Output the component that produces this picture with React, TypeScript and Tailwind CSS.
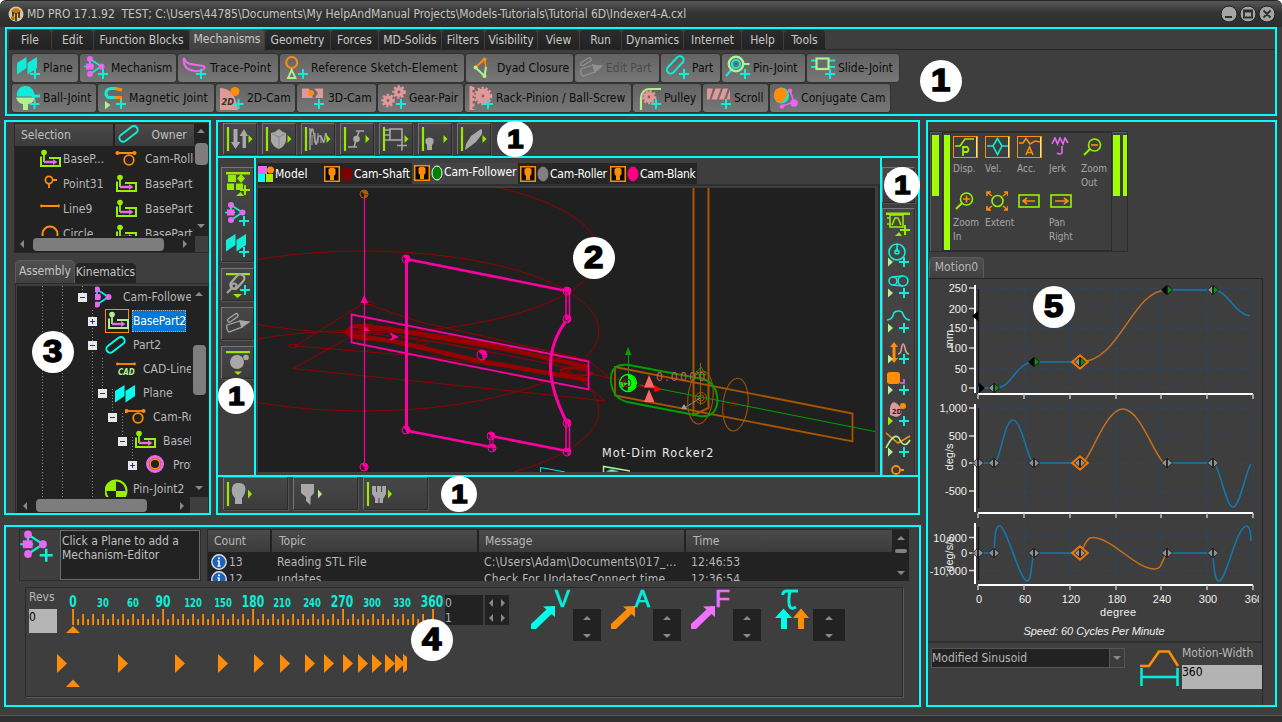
import React from "react";

type Kids = { children?: React.ReactNode };

const TEAL = "#10ecd8";
const MAG = "#e868f0";
const ORG = "#ff8c0a";
const LIME = "#98f000";
const PALE = "#b0f090";
const PINK = "#e09898";
const GREY = "#a8a8a8";

/* ---------- drawing helpers ---------- */

const Plus = ({ x, y, c = TEAL }: { x: number; y: number; c?: string }) => (
  <path d={`M${x - 5} ${y}H${x + 5}M${x} ${y - 5}V${y + 5}`} stroke={c} strokeWidth="2" fill="none" />
);

const Gear = ({ x, y, r }: { x: number; y: number; r: number }) => (
  <g>
    <circle cx={x} cy={y} r={r - 0.5} fill={PINK} />
    <circle cx={x} cy={y} r={r} fill="none" stroke={PINK} strokeWidth="2.6" strokeDasharray="2.2 1.8" />
    <circle cx={x} cy={y} r="1.4" fill="#6b6b6b" />
  </g>
);

const PlaneShape = ({ c = TEAL }: { c?: string }) => (
  <path d="M5 9L14.5 3V14L5 20.500ZM15.500 9L25 3V14L15.500 20.500Z" fill={c} />
);

const MechShape = () => (
  <g>
    <path d="M10 5L21.500 12.500L10 20M10 5V12M4 12.500H14" stroke={TEAL} strokeWidth="1.700" fill="none" />
    <circle cx="10" cy="5" r="3" fill={MAG} />
    <circle cx="21.500" cy="12.500" r="3" fill={MAG} />
    <circle cx="10" cy="20" r="3" fill={MAG} />
    <rect x="6" y="9.500" width="7.500" height="6" fill={MAG} />
  </g>
);

const SlotShape = ({ c = TEAL }: { c?: string }) => (
  <rect x="5" y="-3.500" width="21" height="7.500" rx="3.750" fill="none" stroke={c} strokeWidth="2" />
);

const BasePart = ({ c = LIME }: { c?: string }) => (
  <g>
    <path d="M2 7.500V17H21V9H10" fill="none" stroke={c} strokeWidth="2" />
    <path d="M5 13V3" stroke={c} strokeWidth="1.800" />
    <circle cx="5" cy="3.500" r="2.800" fill={c} />
    <path d="M5 13H16" stroke={MAG} strokeWidth="2.400" />
    <path d="M14 10L18.500 13L14 16Z" fill={MAG} />
  </g>
);

const CamRoller = () => (
  <g fill="none" stroke={ORG} strokeWidth="1.800">
    <path d="M2 4H20" />
    <circle cx="2.500" cy="4" r="1.200" fill={ORG} />
    <circle cx="19.500" cy="4" r="1.200" fill={ORG} />
    <circle cx="14" cy="11" r="4.800" />
  </g>
);

const Svg = ({ w, h, children, cls = "" }: Kids & { w: number; h: number; cls?: string }) => (
  <svg width={w} height={h} viewBox={`0 0 ${w} ${h}`} className={`shrink-0 ${cls}`}>
    {children}
  </svg>
);

/* ---------- ribbon ---------- */

const menuTabs: [string, string][] = [
  ["File", "w-[42px]"],
  ["Edit", "w-[41px]"],
  ["Function Blocks", "w-[95px]"],
  ["Mechanisms", "w-[74px]"],
  ["Geometry", "w-[65px]"],
  ["Forces", "w-[47px]"],
  ["MD-Solids", "w-[62px]"],
  ["Filters", "w-[42px]"],
  ["Visibility", "w-[52px]"],
  ["View", "w-[41px]"],
  ["Run", "w-[41px]"],
  ["Dynamics", "w-[61px]"],
  ["Internet", "w-[57px]"],
  ["Help", "w-[41px]"],
  ["Tools", "w-[41px]"],
];

type Tool = { label: string; w: string; iw: number; off?: boolean; tr?: string; icon: React.ReactNode };

const row1: Tool[] = [
  { label: "Plane", w: "w-[66px]", iw: 31, icon: <><PlaneShape /><Plus x={23} y={20} /></> },
  { label: "Mechanism", w: "w-[96px]", iw: 31, icon: <><MechShape /><Plus x={23} y={20} /></> },
  {
    label: "Trace-Point", w: "w-[100px]", iw: 32, tr: "tracking-[0.2px]",
    icon: <><path d="M6 4C8 11 14 10 25 12C29 13 25 18 17 17C8 16 5 11 6 4Z" fill="none" stroke={MAG} strokeWidth="2.200" /><Plus x={23} y={20} /></>,
  },
  {
    label: "Reference Sketch-Element", w: "w-[184px]", iw: 31, tr: "tracking-[0.17px]",
    icon: <><circle cx="11.700" cy="8.500" r="5.500" fill="none" stroke={ORG} strokeWidth="2" /><path d="M11.700 14V17" stroke={ORG} strokeWidth="2" /><path d="M11.700 16L8 24H15.500Z" fill="none" stroke={PALE} strokeWidth="1.800" /><Plus x={23} y={20} /></>,
  },
  {
    label: "Dyad Closure", w: "w-[107px]", iw: 31,
    icon: <><path d="M9.500 13.500L18.500 5" stroke={ORG} strokeWidth="2" /><path d="M18.500 5L20 14" stroke={ORG} strokeWidth="1.500" /><path d="M9.500 13.500L18.500 22L20 13" stroke={PALE} strokeWidth="2" fill="none" /><circle cx="18.500" cy="5.500" r="2" fill={ORG} /><circle cx="9.500" cy="13.500" r="2" fill={PALE} /><circle cx="18.500" cy="22" r="2" fill={PALE} /></>,
  },
  {
    label: "Edit Part", w: "w-[84px]", iw: 31, off: true,
    icon: <g fill="none" stroke="#929292" strokeWidth="1.200"><rect x="5" y="6" width="12" height="3.600" rx="1.800" transform="rotate(-32 11 8)" /><path d="M6 15L18 11L20 18L8 22Q5 21 6 15Z" /><path d="M18 11L27 12L20 18Z" fill="#929292" /></g>,
  },
  { label: "Part", w: "w-[59px]", iw: 31, icon: <><g transform="translate(3.500 22) rotate(-47)"><SlotShape /></g><Plus x={23} y={20} /></> },
  {
    label: "Pin-Joint", w: "w-[83px]", iw: 31,
    icon: <><path d="M4 22L11 14" stroke={TEAL} strokeWidth="2" /><circle cx="14" cy="10" r="7.200" fill="none" stroke={PALE} strokeWidth="2.400" /><circle cx="14" cy="10" r="4" fill="none" stroke={TEAL} strokeWidth="2.200" /><path d="M21 10H27.500" stroke={PALE} strokeWidth="2" /><Plus x={23} y={20} /></>,
  },
  {
    label: "Slide-Joint", w: "w-[92px]", iw: 31,
    icon: <><path d="M4 6.500H28M4 13H28" stroke={TEAL} strokeWidth="1.800" /><rect x="9.500" y="4.500" width="12" height="10.500" fill="#6a6a6a" stroke={PALE} strokeWidth="2.200" /><Plus x={23} y={20} /></>,
  },
];

const row2: Tool[] = [
  {
    label: "Ball-Joint", w: "w-[84px]", iw: 31,
    icon: <><path d="M4 13.500H23Q21 20 16 20V26H11V20Q6 20 4 13.500Z" fill={PALE} /><path d="M5 12.500A8.700 8.700 0 1 1 22 12.500Z" fill={TEAL} /><path d="M20 12H28" stroke={TEAL} strokeWidth="3" /><Plus x={22.500} y={20} /></>,
  },
  {
    label: "Magnetic Joint", w: "w-[116px]", iw: 31, tr: "tracking-[0.15px]",
    icon: <><path d="M18 4.500H13Q8 5 8 9.500T13 13.500H18" fill="none" stroke={TEAL} strokeWidth="3.200" /><path d="M17 4.500L24 6M17 13.500H24" stroke={ORG} strokeWidth="3.200" /><path d="M7 17V25.500L12.500 21Z" fill={PALE} /><Plus x={23} y={20} /></>,
  },
  {
    label: "2D-Cam", w: "w-[79px]", iw: 31,
    icon: <><path d="M4 26V4Q19 4 22 26Z" fill={PINK} /><circle cx="19" cy="7.500" r="4.500" fill={ORG} /><text x="5.500" y="21" className="text-[9px] font-bold italic" fill="#3a2a2a">2D</text><Plus x={22.500} y={20} /></>,
  },
  {
    label: "3D-Cam", w: "w-[79px]", iw: 31,
    icon: <><path d="M5 4.500H12L16 14H5ZM17 4.500H26V14H18L21 9Z" fill={PINK} /><circle cx="14" cy="9" r="3" fill={ORG} /><Plus x={22} y={20} /></>,
  },
  { label: "Gear-Pair", w: "w-[85px]", iw: 31, icon: <><Gear x={21} y={8} r={5.5} /><Gear x={10} y={16.5} r={5.5} /><Plus x={23} y={20} /></> },
  {
    label: "Rack-Pinion / Ball-Screw", w: "w-[166px]", iw: 31,
    icon: <><rect x="4.500" y="2" width="3" height="24" fill={PINK} /><path d="M8 3V26" stroke={PINK} strokeWidth="3" strokeDasharray="3 2.500" /><Gear x={18} y={12} r={8} /><Plus x={23} y={20} /></>,
  },
  {
    label: "Pulley", w: "w-[68px]", iw: 31,
    icon: <><path d="M8 26V14Q9 5 17 5H28" fill="none" stroke={PALE} strokeWidth="2.200" /><Gear x={16} y={13} r={6} /><Plus x={23} y={20} /></>,
  },
  {
    label: "Scroll", w: "w-[65px]", iw: 31,
    icon: <><path d="M4 4.500H10L6.500 15.500H4ZM12.500 4.500H18L14 15.500H8.500ZM20 4.500H25L21 15.500H16ZM27 5V15.500H23.500Z" fill={PINK} /><Plus x={23} y={20} /></>,
  },
  {
    label: "Conjugate Cam", w: "w-[120px]", iw: 31, tr: "tracking-[0.1px]",
    icon: <><path d="M20 7L24 18L12 22" stroke={MAG} strokeWidth="1.600" fill="none" /><ellipse cx="11.500" cy="11.500" rx="7.500" ry="8" fill={TEAL} /><path d="M4 11Q4 4 11 4Q18 4 17 11Q14 19 9 19Q4 16 4 11Z" fill={ORG} /><circle cx="20" cy="6.700" r="2.300" fill={MAG} /><circle cx="24" cy="19" r="3.800" fill={MAG} /><circle cx="12" cy="22.500" r="2.300" fill={MAG} /></>,
  },
];

const ToolButton = ({ t }: { t: Tool }) => (
  <div className={`flex h-[28px] shrink-0 items-center rounded-[3px] bg-linear-to-b from-[#636363] to-[#777777] shadow-[0_0_0_1px_#333333] ${t.w}`}>
    <Svg w={t.iw} h={28}>{t.icon}</Svg>
    <span className={`whitespace-pre ${t.off ? "text-[#4a4a4a]" : "text-[#0a0a0a]"} ${t.tr ?? ""}`}>{t.label}</span>
  </div>
);

const Ribbon = () => (
  <section className="ml-[5px] h-[89px] w-[1272px] shrink-0 border-2 border-[#00ffff]">
    <div className="flex h-[21px] items-end gap-px border-b border-[#262626] pl-0.5">
      {menuTabs.map(([t, w]) => (
        <div
          key={t}
          className={`flex shrink-0 justify-center rounded-t-[4px] whitespace-pre text-[#c8c8c8] ${w} ${
            t === "Mechanisms" ? "-mb-px h-[21px] bg-linear-to-b from-[#505050] to-[#404040] pt-0.5" : "h-[19px] bg-linear-to-b from-[#2c2c2c] to-[#222222] pt-0.5"
          }`}
        >
          {t}
        </div>
      ))}
    </div>
    <div className="flex flex-col gap-0.5 pt-1 pl-[5px]">
      <div className="flex gap-0.5">{row1.map((t) => <ToolButton key={t.label} t={t} />)}</div>
      <div className="flex gap-0.5">{row2.map((t) => <ToolButton key={t.label} t={t} />)}</div>
    </div>
  </section>
);

/* ---------- left side: selection list and assembly tree ---------- */

const Arrow = ({ d, cls = "" }: { d: "up" | "down" | "left" | "right"; cls?: string }) => {
  const p = { up: "M0 6H8L4 2Z", down: "M0 2H8L4 6Z", left: "M6 0V8L2 4Z", right: "M2 0V8L6 4Z" }[d];
  return (
    <svg width="8" height="8" className={`shrink-0 ${cls}`}>
      <path d={p} fill="#888888" />
    </svg>
  );
};

const Point = () => (
  <g fill="none" stroke={ORG} strokeWidth="1.800"><circle cx="10" cy="6" r="3.600" /><path d="M14 6H18M10 10V14" /></g>
);
const Line = () => (
  <g fill={ORG}><path d="M2 7H20" stroke={ORG} strokeWidth="1.800" /><circle cx="2.500" cy="7" r="1.400" /><circle cx="19.500" cy="7" r="1.400" /></g>
);

const selRows: [React.ReactNode, string, React.ReactNode, string][] = [
  [<BasePart key="a" />, "BaseP...", <CamRoller key="b" />, "Cam-Roller"],
  [<Point key="a" />, "Point31", <BasePart key="b" />, "BasePart1"],
  [<Line key="a" />, "Line9", <BasePart key="b" />, "BasePart1"],
  [<circle key="a" cx="11" cy="10" r="7.500" fill="none" stroke={ORG} strokeWidth="2" />, "Circle", <BasePart key="b" />, "BasePart1"],
];

const SelectionList = () => (
  <div className="ml-2 h-[130px] w-[195px] shrink-0 border border-[#2a2a2a] bg-[#222222]">
    <div className="flex h-[112px]">
      <div className="w-[180px] overflow-hidden">
        <div className="flex h-[22px] gap-0.5">
          <div className="flex w-[98px] items-center bg-linear-to-b from-[#4a4a4a] to-[#3b3b3b] pl-1.5 text-[#c0c0c0]">Selection</div>
          <div className="flex w-[80px] items-center bg-linear-to-b from-[#4a4a4a] to-[#3b3b3b] text-[#c0c0c0]">
            <Svg w={37} h={22}><g transform="translate(1 19) rotate(-37)"><SlotShape /></g></Svg>
            Owner
          </div>
        </div>
        {selRows.map(([i1, a, i2, b], i) => (
          <div key={i} className="flex h-[25px] items-center text-[#b8b8b8]">
            <div className="flex w-[98px] shrink-0 items-center pl-[24px]">
              <Svg w={24} h={20}>{i1}</Svg>
              <span className="whitespace-pre">{a}</span>
            </div>
            <div className="flex shrink-0 items-center pl-0.5">
              <Svg w={30} h={20}>{i2}</Svg>
              <span className="whitespace-pre">{b}</span>
            </div>
          </div>
        ))}
      </div>
      <div className="flex w-[14px] flex-col items-center pt-[3px]">
        <Arrow d="up" />
        <div className="mt-2 h-[22px] w-[13px] rounded-[4px] bg-[#7d7d7d]" />
        <Arrow d="down" cls="mt-[57px]" />
      </div>
    </div>
    <div className="flex h-[16px] items-center pl-[3px]">
      <Arrow d="left" />
      <div className="ml-[7px] h-[13px] w-[131px] rounded-[4px] bg-[#7d7d7d]" />
      <Arrow d="right" cls="ml-[17px]" />
      <div className="ml-auto h-[16px] w-[13px] bg-[#3e3e3e]" />
    </div>
  </div>
);

type Node = { pad: string; box: "" | "+" | "-"; icon: React.ReactNode; label: string; sel?: boolean };

const nodes: Node[] = [
  { pad: "pl-[61px]", box: "-", label: "Cam-Follower", icon: <g transform="translate(-8 -1.500)"><MechShape /></g> },
  { pad: "pl-[71px]", box: "+", label: "BasePart2", sel: true, icon: <g transform="translate(1 1)"><BasePart c={PALE} /></g> },
  { pad: "pl-[71px]", box: "-", label: "Part2", icon: <g transform="translate(-2 20) rotate(-37)"><SlotShape c="#00ffee" /></g> },
  {
    pad: "pl-[81px]", box: "", label: "CAD-Lines",
    icon: <g><g transform="translate(0 -1)"><Line /></g><text x="3" y="17" className="text-[8px] font-bold italic" fill={PALE}>CAD</text></g>,
  },
  { pad: "pl-[81px]", box: "-", label: "Plane", icon: <g transform="translate(-5 0)"><PlaneShape c="#00ffee" /></g> },
  { pad: "pl-[91px]", box: "-", label: "Cam-Roller", icon: <g transform="translate(-1 1)"><CamRoller /></g> },
  { pad: "pl-[101px]", box: "-", label: "BasePart3", icon: <g transform="translate(-1 0)"><BasePart /></g> },
  {
    pad: "pl-[111px]", box: "+", label: "Profile",
    icon: <g fill="none" strokeWidth="3"><circle cx="10" cy="10" r="7.500" stroke={MAG} /><circle cx="10" cy="10" r="5" stroke={ORG} strokeWidth="1.800" /></g>,
  },
  {
    pad: "pl-[71px]", box: "", label: "Pin-Joint2",
    icon: <g><circle cx="11" cy="13" r="10.500" fill="none" stroke={LIME} strokeWidth="2" /><path d="M11 13V3A10 10 0 0 0 1 13ZM11 13H21A10 10 0 0 1 11 23Z" fill={LIME} /></g>,
  },
];

const AssemblyTree = () => (
  <div className="mt-[7px] ml-[9px] w-[196px]">
    <div className="flex h-[23px] items-end">
      <div className="flex h-[23px] w-[60px] items-center justify-center rounded-t-[5px] border border-b-0 border-[#5a5a5a] bg-linear-to-b from-[#505050] to-[#404040] pb-0.5 text-[#c4c4c4]">Assembly</div>
      <div className="flex h-[20px] w-[61px] items-center justify-center rounded-t-[5px] bg-[#252525] pb-0.5 text-[#c4c4c4]">Kinematics</div>
    </div>
    <div className="h-[230px] w-[194px] border border-[#2a2a2a] pt-0.5 pl-px">
      <div className="flex h-[211px] bg-[#222222]">
        <div className="relative w-[174px] overflow-hidden">
          <svg width="174" height="211" className="absolute top-0 left-0">
            <g stroke="#8c8c8c" strokeDasharray="1 2">
              <path d="M25.500 0V211M45.500 0V211M65.500 0V8M75.500 24V211M85.500 72V108M95.500 103V132M105.500 127V156M115.500 151V180" />
            </g>
          </svg>
          {nodes.map((n, i) => (
            <div key={i} className={`relative -top-px flex h-[24px] items-center ${n.pad}`}>
              <div className="w-[9px] shrink-0">
                {n.box !== "" && (
                  <svg width="9" height="9" className="block">
                    <rect width="9" height="9" fill="#e8e8e8" />
                    <path d={n.box === "+" ? "M2 4.500H7M4.500 2V7" : "M2 4.500H7"} stroke="#203870" />
                  </svg>
                )}
              </div>
              <div className={`ml-2 flex h-[24px] w-[24px] shrink-0 items-center ${n.sel ? "border border-[#ff8c0a]" : ""}`}>
                <Svg w={24} h={22}>{n.icon}</Svg>
              </div>
              <span className={n.sel ? "ml-[3px] h-[22px] w-[54px] border border-dotted border-[#ff9840] bg-[#0078d7] pt-[2px] tracking-[-0.15px] whitespace-pre text-white" : "ml-[4px] whitespace-pre text-[#b8b8b8]"}>{n.label}</span>
            </div>
          ))}
        </div>
        <div className="flex w-[16px] flex-col items-center pt-1">
          <Arrow d="up" />
          <div className="mt-[47px] h-[50px] w-[13px] rounded-[4px] bg-[#7d7d7d]" />
          <Arrow d="down" cls="mt-[89px]" />
        </div>
      </div>
      <div className="flex h-[17px] items-center bg-[#222222] pl-1">
        <Arrow d="left" />
        <div className="ml-[7px] h-[13px] w-[111px] rounded-[4px] bg-[#7d7d7d]" />
        <Arrow d="right" cls="ml-[31px]" />
        <div className="ml-auto h-[17px] w-[18px] bg-[#3e3e3e]" />
      </div>
    </div>
  </div>
);

const LeftPanel = () => (
  <section className="h-[395px] w-[207px] shrink-0 overflow-hidden border-2 border-[#00ffff] pt-px">
    <SelectionList />
    <AssemblyTree />
  </section>
);

/* ---------- centre: toolbars and model view ---------- */

const frame = "overflow-hidden border border-t-[#767676] border-l-[#767676] border-r-[#2b2b2b] border-b-[#2b2b2b] bg-linear-to-b from-[#474747] to-[#3c3c3c] p-px shadow-[1px_1px_0_#555555]";

const LG = "#98e800";
const topTools: React.ReactNode[] = [
  <g key="0" fill={GREY}><path d="M8.500 4H12.500V17H15.500L10.500 24L6 17H8.500ZM17.500 23V11H14.500L19 4L23 11H21V23Z" /></g>,
  <g key="1"><path d="M7 8Q12 7 15 4Q18 7 22 8V16Q21 21 15 24Q8 21 7 16Z" fill={GREY} /><path d="M8 9L15 12L21 9M15 12V23" fill="none" stroke="#8a8a8a" /></g>,
  <g key="2" fill="none" stroke={GREY} strokeWidth="1.400"><path d="M7 3V25M7 14Q9 -4 11 10T14 17T17 11T20 16T22 12T24 14" /><path d="M9 10V20M12 8V18M15 8V18M18 10V18" strokeWidth="1" /></g>,
  <g key="3" fill="none" stroke={GREY} strokeWidth="1.600"><path d="M6 22H12L17 6H22M8 22H15M14 6H22" /><circle cx="14.500" cy="14" r="2.500" fill={GREY} /></g>,
  <g key="4" fill="none" stroke={GREY} strokeWidth="1.600"><rect x="9" y="4" width="12" height="11" /><path d="M4 5H9M4 10H9M4 15H9M16 20.500H26M21 15.500V25.500" /></g>,
  <path key="5" d="M10 14Q14 11 18 14V18L16.500 20V25H11.500V20L10 18Z" fill={GREY} transform="translate(-4.500 0)" />,
  <path key="6" d="M6 25L7 19L12 11L22 4L23 5V9L17 17L9 23Z" fill={GREY} />,
];

const TopBar = () => (
  <div className="flex h-[34px] shrink-0 gap-[5px] pt-px pl-[5px]">
    {topTools.map((g, i) => (
      <div key={i} className={`h-[32px] w-[34px] ${frame}`}>
        <svg width="31" height="29" className="block">
          <path d="M3 2V26" stroke={LG} strokeWidth="2.200" />
          {g}
          <path d="M23.500 10V18L27.500 14Z" fill={LG} />
        </svg>
      </div>
    ))}
  </div>
);

const LeftBar = () => (
  <div className="flex w-[36px] shrink-0 flex-col gap-[6px] pt-[9px] pl-[3px]">
    <div className={`h-[95px] w-[33px] ${frame}`}>
      <svg width="30" height="92" className="block">
        <g fill={LG}><rect x="3" y="3" width="24" height="2.500" /><rect x="5" y="6" width="8" height="7" /><path d="M18 5L22 9.500L18 14L14 9.500Z" /><rect x="4" y="14.500" width="7" height="6.500" /><rect x="13" y="14.500" width="7" height="6.500" /><path d="M13 27L17.500 23L21 27Z" /></g>
        <Plus x={22} y={21} c={LG} />
        <g transform="translate(-2 31)"><MechShape /><Plus x={23} y={21} /></g>
        <g transform="translate(-2 62)"><PlaneShape /><Plus x={23} y={21} /></g>
      </svg>
    </div>
    <div className={`h-[33px] w-[33px] ${frame}`}>
      <svg width="30" height="30" className="block">
        <rect x="3" y="3" width="24" height="2.200" fill={LG} />
        <g fill="none" stroke={GREY} strokeWidth="2.200"><rect x="-8" y="-4" width="17" height="8" rx="4" transform="translate(14 12) rotate(-48)" /><circle cx="11" cy="16" r="2.500" /><path d="M4 23L9 18" /></g>
        <path d="M10 24H19L14.500 28Z" fill={LG} /><Plus x={22} y={20} />
      </svg>
    </div>
    <div className={`h-[33px] w-[33px] ${frame}`}>
      <svg width="30" height="30" className="block">
        <g fill="none" stroke={GREY} strokeWidth="1.300"><rect x="4" y="7" width="12" height="3.600" rx="1.800" transform="rotate(-35 10 9)" /><path d="M4 16L17 12L19 18L6 23Q3 21 4 16Z" /><path d="M17 12L26 13L19 18Z" fill={GREY} /></g>
      </svg>
    </div>
    <div className={`h-[33px] w-[33px] ${frame}`}>
      <svg width="30" height="30" className="block">
        <rect x="3" y="3" width="24" height="2.200" fill={LG} />
        <circle cx="14" cy="14" r="7" fill={GREY} /><circle cx="23" cy="9.500" r="2.800" fill={GREY} />
        <path d="M11 23.500H19L15 27Z" fill={LG} />
      </svg>
    </div>
  </div>
);

const PlayPlus = ({ y, c = PALE }: { y: number; c?: string }) => (
  <g><path d={`M4 ${y - 4.5}V${y + 4.5}L9 ${y}Z`} fill={c} /><Plus x={20} y={y} /></g>
);

const RightBar = () => (
  <div className="flex w-[36px] shrink-0 flex-col gap-[5px] overflow-hidden pt-[9px]">
    <div className={`h-[36px] w-[33px] shrink-0 ${frame}`}>
      <svg width="30" height="32" className="block"><rect x="3" y="4" width="24" height="2.500" fill={LG} /></svg>
    </div>
    <div className={`h-[275px] w-[33px] shrink-0 ${frame}`}>
      <svg width="30" height="272" className="block">
        <rect x="2" y="2.500" width="24" height="2.500" fill={LG} />
        <g fill="none" stroke={LG} strokeWidth="1.600"><rect x="6" y="5" width="13" height="12" /><path d="M3 8H6M3 14H6M8 15L11 8H14L17 15" /></g>
        <path d="M11 26L15 22L18 26Z" fill={LG} /><Plus x={21} y={20} c={LG} />
        <g fill="none" stroke={TEAL} strokeWidth="1.600"><circle cx="13" cy="42" r="8" /><circle cx="13" cy="42" r="2" /><path d="M13 34V42" /></g>
        <PlayPlus y={52} />
        <g fill="none" stroke={TEAL} strokeWidth="1.600"><circle cx="9" cy="71" r="4" /><circle cx="19" cy="71" r="5" /><path d="M8 67L19 66M9 75L19 76" /></g>
        <PlayPlus y={83} />
        <path d="M3 110Q8 110 10 103Q11 101 15 101Q18 101 19 104Q21 110 26 110" fill="none" stroke={TEAL} strokeWidth="1.600" />
        <PlayPlus y={118} />
        <path d="M10 132L14 137H11.500V148H14L10 153L6 148H8.500V137H6Z" fill={ORG} /><path d="M14 144Q17 144 17.500 138Q19 130 21 138Q22 144 25 144" fill="none" stroke={PINK} strokeWidth="1.600" />
        <PlayPlus y={149} />
        <rect x="3" y="162" width="13" height="12" rx="3" fill={ORG} /><path d="M16 173H20V169" fill="none" stroke={MAG} strokeWidth="1.600" />
        <PlayPlus y={180} />
        <path d="M6 205Q5 193 10 192Q16 194 18 202Q17 206 12 207Z" fill={PINK} /><circle cx="19" cy="196" r="3" fill={ORG} /><text x="8" y="204" className="text-[7px] font-bold" fill="#222222">2D</text>
        <PlayPlus y={211} c={LG} />
        <path d="M2 223L14 233L26 226" fill="none" stroke={ORG} strokeWidth="1.600" /><path d="M2 238Q10 222 15 228Q20 240 26 230" fill="none" stroke={PALE} strokeWidth="1.600" />
        <PlayPlus y={242} />
        <g fill="none" stroke={ORG} strokeWidth="1.800"><circle cx="12" cy="260" r="4" /><path d="M16 260H20M12 264V271" /></g>
      </svg>
    </div>
  </div>
);

const PartGlyph = () => (
  <svg width="16" height="16" className="shrink-0">
    <rect x="0.750" y="0.750" width="14.500" height="14.500" fill="#080808" stroke={ORG} strokeWidth="1.500" />
    <path d="M4.500 3Q8 0.500 11.500 3V8L10 10V14H6V10L4.500 8Z" fill={ORG} />
  </svg>
);

const Dot = ({ c, ring }: { c: string; ring?: boolean }) => (
  <svg width="14" height="16" className="shrink-0">
    <ellipse cx="7" cy="8" rx="5" ry="7" fill={c} stroke={ring ? "#ffffff" : c} strokeWidth="1" />
  </svg>
);

const ViewTabs = () => (
  <div className="flex h-[21px] shrink-0 text-white">
    <div className="flex w-[65px] items-center bg-[#262626] text-[12px]">
      <svg width="17" height="16" className="shrink-0"><rect width="9" height="8" fill={MAG} /><circle cx="12.500" cy="4" r="3.500" fill={ORG} /><rect y="8" width="7" height="8" fill="#00ffff" /><rect x="8" y="8" width="7" height="8" fill="#a0f000" /></svg>
      Model
    </div>
    <div className="flex w-[89px] items-center bg-[#262626] pl-[1px] tracking-[-0.1px] whitespace-pre"><PartGlyph /><Dot c="#800000" />Cam-Shaft</div>
    <div className="flex h-[21px] w-[106px] items-start bg-[#444444] pt-0.5 pl-0.5 tracking-[-0.1px] whitespace-pre"><PartGlyph /><Dot c="#008000" ring /><span className="-mt-px">Cam-Follower</span></div>
    <div className="flex w-[90px] items-center bg-[#262626] pl-0.5 tracking-[-0.25px] whitespace-pre"><PartGlyph /><Dot c="#808080" />Cam-Roller</div>
    <div className="flex w-[89px] items-center bg-[#262626] pl-0.5 tracking-[-0.3px] whitespace-pre"><PartGlyph /><Dot c="#ff0080" />Cam-Blank</div>
  </div>
);

const HOT = "#ff00a0";
const Node4 = ({ x, y, r = 4, c = HOT }: { x: number; y: number; r?: number; c?: string }) => (
  <g>
    <circle cx={x} cy={y} r={r} fill="none" stroke={c} strokeWidth="1" />
    <path d={`M${x} ${y}L${x - r * 0.7} ${y - r * 0.7}A${r} ${r} 0 0 1 ${x} ${y - r}ZM${x} ${y - r}V${y}H${x + r}A${r} ${r} 0 0 0 ${x} ${y - r}ZM${x} ${y}L${x + r} ${y + 1}L${x + 1} ${y + r}Z`} fill={c} />
  </g>
);

const ModelCanvas = () => (
  <svg width="617" height="284" viewBox="258 188 617 284" className="block shrink-0 bg-[#202020]">
    <g fill="none" stroke="#960000" strokeWidth="1">
      <ellipse cx="363" cy="253" rx="236" ry="80" />
      <ellipse cx="363" cy="331" rx="236" ry="80" />
      <ellipse cx="363" cy="410.500" rx="236" ry="80" />
      <path d="M364 303L295 346L430 357L560 374M293 368.500L364 329M293 368.500L570 397L605 401M364 303L420 322L588 360L612 380M588 360L520 345M575 375L605 401" />
      <ellipse cx="293" cy="346" rx="5" ry="1.800" />
      <ellipse cx="369" cy="303" rx="5" ry="1.500" />
      <ellipse cx="733" cy="404" rx="5" ry="1.800" />
      <path d="M352 331L450 344L590 372M372 328L580 364M397 335L490 352" />
      <ellipse cx="422" cy="343" rx="6" ry="2" />
      <ellipse cx="574" cy="372" rx="13" ry="5" />
      <ellipse cx="574" cy="372" rx="7" ry="3" />
      <path d="M590 374L625 381L640 384" />
    </g>
    <g fill="none" stroke="#980000" strokeWidth="4.500">
      <path d="M354 326L387 328.500L500 347.500L588 367" />
      <path d="M350 335L397 342L477 360.500L588 380" />
      <path d="M345 332Q350 324 372 325M345 331Q350 341 372 339" strokeWidth="2.500" />
      <circle cx="364" cy="331" r="4" strokeWidth="2.500" />
      <path d="M560 370Q575 364 592 373Q575 380 560 371" strokeWidth="2" />
    </g>
    <g fill="none" stroke={HOT}>
      <path d="M364.500 196V467" strokeWidth="1.200" />
      <path d="M406.500 259V430" strokeWidth="3" />
      <path d="M406 259L567 291M406 430.500L491 447M491 436L567 451" strokeWidth="2.600" />
      <path d="M490 436V447M493 436V447" />
      <path d="M566 291V320M569.500 291V320M566 423V451M569.500 423V451" strokeWidth="1.500" />
      <path d="M566 321Q551 341 550.500 365T567 423" strokeWidth="3" />
      <path d="M351.500 314.500L588.500 361.500V389.500L351.500 342.500Z" strokeWidth="1.800" />
    </g>
    <path d="M364 295L360.500 303H368Z" fill={HOT} />
    <path d="M390 333L398 337L390 340L393 337Z" fill={HOT} stroke={HOT} />
    <Node4 x={406} y={259} /><Node4 x={567} y={291} /><Node4 x={567} y={319} /><Node4 x={406} y={430} />
    <Node4 x={491} y={436} /><Node4 x={492} y={448} /><Node4 x={567} y={423} /><Node4 x={567} y={452} />
    <Node4 x={482} y={355} r={5} /><Node4 x={364} y={467} /><Node4 x={364} y={194} c="#b05800" />
    <path d="M364 326V331H370Z" fill={HOT} />
    <g fill="none" stroke="#a85400">
      <path d="M693.500 188V415L708.500 408V188" strokeWidth="2" />
      <path d="M615 367L852.500 413.500V441.500L615 395.500Z" strokeWidth="1.800" />
      <ellipse cx="735.500" cy="404.500" rx="12.500" ry="26.500" transform="rotate(6 735 404)" />
      <ellipse cx="700.500" cy="397.500" rx="12.500" ry="26.500" transform="rotate(6 700 397)" />
      <circle cx="701" cy="398" r="5.500" /><circle cx="701" cy="398" r="3" /><path d="M700.500 363V405M696 371L705 381" />
    </g>
    <g fill="none" stroke="#00a000">
      <path d="M629 365Q609 363 611 382Q613 400 630 402.500L700 416Q716 418 717.500 401Q717 383 703 379Z" strokeWidth="1.900" />
      <path d="M628.500 352V383M640 385L875 431.500" />
      <path d="M695 374L701 367L706 375Z" />
    </g>
    <path d="M628 347L625 355H631.500Z" fill="#00a000" />
    <circle cx="628" cy="383" r="8.500" fill="none" stroke="#00ff00" strokeWidth="1.300" />
    <path d="M628 383L628 374.500A9 9 0 0 1 636 384ZM628 383V391A9 9 0 0 0 636 384ZM628 383L620 382L622 388Z" fill="#00ff00" />
    <circle cx="627" cy="383" r="4" fill="none" stroke="#b00040" />
    <path d="M636 385L655 389" stroke="#c00000" /><path d="M654 385L662 389.500L654 392Z" fill="#ff0000" />
    <path d="M649 375L644 387.500H654.500ZM649 389.500L644 402H654.500Z" fill="#ff6666" />
    <text x="656" y="381" className="font-['DejaVu_Sans'] text-[12px]" fill="#d85858" textLength="49">0.0000</text>
    <path d="M700 398L686 407" stroke="#a0a0a0" strokeDasharray="4 1" /><path d="M681 409L684 404L687 409Z" fill="#a0a0a0" />
    <text x="602" y="457" className="font-['DejaVu_Sans'] text-[12.500px]" fill="#e8e8e8" textLength="111.500">Mot-Dim Rocker2</text>
    <path d="M540.500 472V467.500L565 472" fill="none" stroke="#00e8e8" />
    <path d="M603.500 472V466.500L630 471" fill="none" stroke={PALE} strokeWidth="1.500" /><path d="M606 472Q611 467 619 472Z" fill={PALE} stroke="#00a080" />
  </svg>
);

const bottomTools: [string, string, boolean][] = [
  ["M13 5Q20 4 20.500 11Q20 17 17 20V26H10V20Q6 16 7 10Q8 5 13 5Z", LG, true],
  ["M6 6H19V15L15.500 19V27L11 23V19L6 15Z", PALE, false],
  ["M7 8H11V14H12V8H16V14H17V8H21V16L18 21V25H14.500V20H13.500V25H10V20L7 16Z", LG, true],
];

const Centre = () => (
  <section className="flex h-[395px] w-[704px] shrink-0 flex-col border-2 border-[#00ffff]">
    <TopBar />
    <div className="flex h-[321px] shrink-0 border-y-2 border-[#00ffff]">
      <LeftBar />
      <div className="flex w-[628px] shrink-0 flex-col border-x-2 border-[#00ffff] pt-[5px] pl-0.5">
        <ViewTabs />
        <div className="w-[622px] border-t-2 border-r-2 border-[#303030] pt-0.5"><ModelCanvas /></div>
      </div>
      <RightBar />
    </div>
    <div className="flex h-[36px] shrink-0 gap-[5px] pl-[5px]">
      {bottomTools.map(([d, c, bar], i) => (
        <div key={i} className={`h-[33px] w-[65px] ${frame}`}>
          <svg width="60" height="30" className="block">
            {bar && <path d="M3 3V27" stroke={LG} strokeWidth="2.200" />}
            <path d={d} fill={GREY} transform="translate(0 -1)" />
            <path d="M23 10.500V19.500L27 15Z" fill={c} />
          </svg>
        </div>
      ))}
    </div>
  </section>
);

/* ---------- bottom: messages and cycle ruler ---------- */

const Info = () => (
  <svg width="16" height="16" className="shrink-0">
    <circle cx="8" cy="8" r="7.200" fill="#1c62b8" stroke="#e0e0e0" strokeWidth="1.400" />
    <path d="M8 6.500V12M6.500 12H9.500M6.500 7H8" stroke="#ffffff" strokeWidth="1.600" /><circle cx="8" cy="4.300" r="1.100" fill="#ffffff" />
  </svg>
);

const HeadCell = ({ w, children }: Kids & { w: string }) => (
  <div className={`flex h-[22px] items-center bg-linear-to-b from-[#4a4a4a] to-[#3b3b3b] text-[#b8b8b8] ${w}`}>{children}</div>
);

const MessageTable = () => (
  <div className="flex h-[52px] w-[702px] overflow-hidden border-t border-l border-[#2a2a2a] bg-[#222222]">
    <div className="w-[684px] shrink-0 text-[#b8b8b8]">
      <div className="flex gap-0.5">
        <HeadCell w="w-[62px] pl-[6px]">Count</HeadCell>
        <HeadCell w="w-[205px] pl-[7px]">Topic</HeadCell>
        <HeadCell w="w-[205px] pl-[6px]">Message</HeadCell>
        <HeadCell w="w-[206px] pl-[7px]">Time</HeadCell>
      </div>
      {[
        ["13", "Reading STL File", "C:\\Users\\Adam\\Documents\\017_...", "12:46:53"],
        ["12", "updates", "Check For UpdatesConnect time", "12:36:54"],
      ].map(([n, t, m, c], i) => (
        <div key={i} className="flex h-[17px] items-center pt-[3px]">
          <div className="flex w-[69px] items-center gap-0.5 pl-[3px]"><Info />{n}</div>
          <div className="w-[207px] tracking-[0.1px] whitespace-pre">{t}</div>
          <div className="w-[207px] tracking-[0.25px] whitespace-pre">{m}</div>
          <div className="tracking-[0.1px]">{c}</div>
        </div>
      ))}
    </div>
    <div className="flex w-[17px] flex-col items-center pt-1">
      <Arrow d="up" />
      <div className="mt-[7px] h-[4px] w-[12px] rounded-full bg-[#808080]" />
      <Arrow d="down" cls="mt-[16px]" />
    </div>
  </div>
);

const degs = [0, 30, 60, 90, 120, 150, 180, 210, 240, 270, 300, 330, 360];
const plays = [57, 118, 175, 218, 254, 280, 305, 324, 343, 358, 372, 385, 395];

const Ruler = () => (
  <svg width="388" height="108" viewBox="57 588 388 108" className="shrink-0">
    {Array.from({ length: 73 }, (_, i) => i * 5).map((d) => (
      <rect key={d} x={72.2 + d} y={d % 90 === 0 ? 609 : d % 10 === 0 ? 614 : 619} width="1.800" height={d % 90 === 0 ? 16 : d % 10 === 0 ? 11 : 6} fill={ORG} />
    ))}
    {degs.map((d) => (
      <text
        key={d}
        x={73 + d - (d > 180 ? 1 : 0)}
        y={607}
        textAnchor="middle"
        fill={TEAL}
        textLength={String(d).length * (d % 90 === 0 ? 7.5 : 5.9)}
        lengthAdjust="spacingAndGlyphs"
        className={d % 90 === 0 ? "text-[15px] font-bold" : "text-[12px] font-bold"}
      >
        {d}
      </text>
    ))}
    <path d="M73 626L66 633H80ZM73 679.500L66 687H80Z" fill={ORG} />
    {plays.map((x) => <path key={x} d={`M${x} 654V673L${x + 10} 663.500Z`} fill={ORG} />)}
    <path d="M403 654L407 657V670L403 673Z" fill={ORG} />
  </svg>
);

const Spin = ({ w = "w-[28px]" }: { w?: string }) => (
  <div className={`mt-[21px] flex h-[32px] shrink-0 flex-col items-center justify-between bg-[#222222] pt-[5px] pb-px ${w}`}><Arrow d="up" /><Arrow d="down" /></div>
);

const Vec = ({ c, t, tc }: { c: string; t: string; tc: string }) => (
  <svg width="42" height="44" className="shrink-0">
    <path d="M0 36L15.500 21.500L12 18.500L24 18V29L20.500 26L5 41H0Z" fill={c} />
    <text x="24" y="18.500" fill={tc} stroke={tc} strokeWidth="0.700" textLength="15" lengthAdjust="spacingAndGlyphs" className="font-['Liberation_Sans'] text-[24px]">{t}</text>
  </svg>
);

const BottomPanel = () => (
  <section className="mt-[10px] h-[182px] w-[917px] shrink-0 border-2 border-[#00ffff]">
    <div className="flex pt-0.5 pl-[13px]">
      <div className="flex h-[52px] w-[182px] border border-[#2c2c2c]">
        <Svg w={40} h={42}><g transform="translate(-5 -2) scale(1.300)"><MechShape /><Plus x={24} y={21} /></g></Svg>
        <div className="h-[50px] w-[140px] border border-[#6c6c6c] bg-[#222222] pt-[3px] pl-px leading-[14px] text-[#c0c0c0]">Click a Plane to add a<br />Mechanism-Editor</div>
      </div>
      <div className="ml-[6px]"><MessageTable /></div>
    </div>
    <div className="mt-[6px] ml-[19px] flex h-[110px] w-[878px] border border-[#2a2a2a] shadow-[1px_1px_0_#5a5a5a]">
      <div className="w-[31px] shrink-0 pt-px pl-[3px] text-[#b8b8b8]">
        Revs
        <div className="mt-1 h-[24px] w-[28px] bg-[#b4b4b4] text-black">0</div>
      </div>
      <Ruler />
      <div className="mt-[7px] flex h-[30px] w-[38px] shrink-0 flex-col bg-[#222222] text-[#b0b0b0]"><span className="h-[15px] leading-[16px]">0</span><span className="h-[15px] leading-[16px]">1</span></div>
      <div className="mt-[7px] ml-0.5 grid h-[30px] w-[24px] shrink-0 grid-cols-2 place-items-center bg-[#222222]"><Arrow d="left" /><Arrow d="right" /><Arrow d="left" /><Arrow d="right" /></div>
      <div className="ml-[22px] flex">
        <Vec c="#00ffe8" t="V" tc="#00f0e0" /><Spin />
        <div className="w-[10px]" /><Vec c={ORG} t="A" tc="#00f0e0" /><Spin />
        <div className="w-[10px]" /><Vec c="#f070ff" t="F" tc="#f070ff" /><Spin />
        <svg width="52" height="44" className="shrink-0">
          <path d="M20 41V30H14L22.500 20.500L31 30H26V41Z" fill="#00ffe8" /><path d="M37 41V30H32L40 20.500L48 30H43V41Z" fill={ORG} />
          <path d="M21.500 7Q22 3 26 3H37M29 3Q27 12 28.500 18Q30 22 35 19" fill="none" stroke="#00f0e0" strokeWidth="3" />
        </svg>
        <Spin w="w-[32px]" />
      </div>
    </div>
  </section>
);

/* ---------- right: motion graphs ---------- */

const GBtn = ({ on, label, icon }: { on?: boolean; label: string; icon: React.ReactNode }) => (
  <div className="w-[32px] shrink-0 overflow-hidden">
    <div className={`h-[22px] w-[25px] ${on ? "border border-[#ff8c0a] shadow-[inset_-1px_0_0_#ffe8a0]" : "p-px"}`}>
      <svg width="22" height="20" className="block" fill="none" strokeWidth="1.600">{icon}</svg>
    </div>
    <div className="mt-[3px] h-[28px] pt-px text-[10px] leading-[14px] whitespace-pre-line text-[#a8a8a8]">{label}</div>
  </div>
);

const GraphTools = () => (
  <div className="mt-[9px] ml-px flex h-[121px] w-[199px] border border-[#2c2c2c] pl-0.5 shadow-[inset_1px_1px_0_#5a5a5a]">
    <div className="mt-[3px] h-[61px] w-[7px] bg-[#a0ff00]" />
    <div className="ml-[3px] flex w-[170px] border border-[#2c2c2c] pl-px">
      <div className="mt-[2px] h-[115px] w-[6px] bg-[#a0ff00]" />
      <div className="flex w-[161px] flex-col gap-px pt-[3px] pl-[3px]">
        <div className="flex">
          <GBtn on label="Disp." icon={<><path d="M1 9H6L11 2H20" stroke={LIME} /><path d="M9 19V10H13Q16 12.500 13 15H9" stroke={LIME} strokeWidth="1.800" /></>} />
          <GBtn on label="Vel." icon={<path d="M1 9H7L11.500 1.500L16 9L11.500 17.500L7 9M16 9H22" stroke={TEAL} />} />
          <GBtn on label="Acc." icon={<><path d="M1 6L5 6L8 1.500L12 7L17 4L22 5" stroke={ORG} /><path d="M8 18L11.500 10L15 18M9.500 15.500H13.500" stroke={ORG} /></>} />
          <GBtn label="Jerk" icon={<><path d="M2 7L5 1L7.500 7L10 1L13 7L15 1L18 6" stroke={MAG} /><path d="M12 9V16Q10 18 7 16" stroke={MAG} /></>} />
          <GBtn label={"Zoom\nOut"} icon={<><circle cx="12.500" cy="8" r="6" stroke={LIME} /><path d="M8 12L2 18" stroke={LIME} strokeWidth="2" /><path d="M9 8H16" stroke={ORG} /></>} />
        </div>
        <div className="flex">
          <GBtn label={"Zoom\nIn"} icon={<><circle cx="12.500" cy="8" r="6" stroke={LIME} /><path d="M8 12L2 18" stroke={LIME} strokeWidth="2" /><path d="M9 8H16M12.500 4.500V11.500" stroke={ORG} /></>} />
          <GBtn label="Extent" icon={<><circle cx="11.500" cy="10" r="5.500" stroke={LIME} /><path d="M1 5V1H5M18 1H22V5M22 15V19H18M5 19H1V15M1 1L6 5M22 1L17 5M22 19L17 15M1 19L6 15" stroke={ORG} /></>} />
          <GBtn label="" icon={<><rect x="1" y="4" width="20" height="12" stroke={LIME} /><path d="M17 10H5M9 7L5 10L9 13" stroke={ORG} /></>} />
          <GBtn label={"Pan\nRight"} icon={<><rect x="1" y="4" width="20" height="12" stroke={LIME} /><path d="M5 10H18M14 7L18 10L14 13" stroke={ORG} /></>} />
        </div>
      </div>
    </div>
    <div className="mt-[3px] ml-px h-[61px] w-[7px] bg-[#a0ff00]" />
    <div className="mt-[3px] ml-[3px] h-[61px] w-[4px] bg-[#a0ff00]" />
  </div>
);

const Mark = ({ x, y, l = "#909090", r = "#909090", hi }: { x: number; y: number; l?: string; r?: string; hi?: boolean }) => (
  <g>
    {hi && <path d={`M${x - 7.5} ${y}L${x} ${y - 6.5}L${x + 7.5} ${y}L${x} ${y + 6.5}Z`} fill="none" stroke="#f07800" strokeWidth="2.400" />}
    <path d={`M${x - 5.5} ${y}L${x - 0.5} ${y - 4.5}V${y + 4.5}Z`} fill={l} stroke="#0c0c0c" strokeWidth="0.700" />
    <path d={`M${x + 5.5} ${y}L${x + 0.5} ${y - 4.5}V${y + 4.5}Z`} fill={r} stroke="#0c0c0c" strokeWidth="0.700" />
  </g>
);

const charts = [
  { top: 285, bot: 393, axis: 394, ticks: [[288, "250"], [308.500, "200"], [328, "150"], [348, "100"], [368.500, "50"], [388, "0"]] as [number, string][], unit: "mm", uy: 339 },
  { top: 404, bot: 512, axis: 513, ticks: [[408, "1,000"], [436, "500"], [463, "0"], [491, "-500"]] as [number, string][], unit: "deg/s", uy: 457 },
  { top: 523, bot: 584, axis: 585, ticks: [[537.500, "10,000"], [553, "0"], [570.500, "-10,000"]] as [number, string][], unit: "deg/s/s", uy: 554 },
];
const xt: [number, string][] = [[978, "0"], [1024, "60"], [1070, "120"], [1116, "180"], [1161, "240"], [1207, "300"], [1253, "360"]];
const BLUE = "#1478b0";
const BRN = "#c87018";

const Charts = () => (
  <svg width="333" height="362" viewBox="928 279 333 362" className="block font-['Liberation_Sans'] text-[11px]" fill="#f0f0f0">
    {charts.map((c) => (
      <g key={c.unit}>
        {xt.slice(1).map(([x]) => <path key={x} d={`M${x + 0.500} ${c.top}V${c.bot - 4}`} stroke="#2a4664" strokeWidth="1" strokeDasharray="1.500 1" />)}
        {c.ticks.map(([y, t]) => (
          <g key={t}>
            <path d={`M980 ${Math.floor(y) + 0.500}H1253`} stroke="#2a4664" strokeDasharray="1.500 1" />
            <path d={`M969 ${y}H974`} stroke="#d0d0d0" strokeWidth="1.500" />
            <text x="967" y={y + 4} textAnchor="end">{t}</text>
          </g>
        ))}
        <path d={`M975 ${c.top}V${c.bot}`} stroke="#ffffff" strokeWidth="2" />
        <path d={`M978.500 ${c.top + 4}V${c.bot - 4}`} stroke="#181818" strokeWidth="1.500" />
        <path d={`M978 ${c.axis}H1253`} stroke="#ffffff" strokeWidth="2" />
        {xt.map(([x]) => <path key={x} d={`M${x} ${c.axis}V${c.axis + 5}`} stroke="#c0c0c0" strokeWidth="1.500" />)}
        <text transform={`translate(953 ${c.uy}) rotate(-90)`} textAnchor="middle">{c.unit}</text>
      </g>
    ))}
    <g fill="none" strokeWidth="1.500">
      <g stroke={BLUE}>
        <path d="M978 388H996C1012 388 1016 362 1034 362H1080M1167 290H1213C1228 290 1234 314 1250 316" />
        <path d="M978 463H994C1000 463 1004 420 1013 420S1028 463 1034 463H1080M1167 463H1214C1220 468 1226 507 1233 507S1246 470 1251 464" />
        <path d="M978 553H994C995 530 996 526 1000 526C1007 528 1020 581 1027 581C1032 581 1031 562 1034 553H1080M1167 553H1213C1214 575 1216 581 1219 581C1227 580 1236 526 1247 526Q1251 528 1251 541" />
      </g>
      <g stroke={BRN}>
        <path d="M1080 362C1120 362 1132 290 1167 290" />
        <path d="M1083 463C1092 455 1106 409 1123 409S1154 455 1164 463" />
        <path d="M1080 553C1084 548 1086 537.500 1092 537.500C1112 537 1135 569 1155 569C1162 569 1162 560 1167 553" />
      </g>
    </g>
    <path d="M972 316L978 311V321ZM979 383V393L985 388Z" fill="#000000" />
    <Mark x={994} y={388} r="#109010" /><Mark x={1034} y={362} l="#000000" r="#109010" /><Mark x={1080} y={362} r="#109010" hi />
    <Mark x={1167} y={290} l="#000000" r="#109010" /><Mark x={1213} y={290} r="#109010" />
    {[463, 553].map((y) => [978, 994, 1034, 1080, 1167, 1213].map((x) => <Mark key={`${x}-${y}`} x={x} y={y} hi={x === 1080} />))}
    {xt.map(([x, t]) => <text key={t} x={x + 1} y="603" textAnchor="middle">{t}</text>)}
    <text x="1118" y="616" textAnchor="middle" textLength="36">degree</text>
    <text x="1094" y="635" textAnchor="middle" className="italic" textLength="141">Speed: 60 Cycles Per Minute</text>
    <rect x="1259" y="590" width="3" height="16" fill="#3e3e3e" />
  </svg>
);

const RightPanel = () => (
  <section className="ml-[5px] h-[587px] w-[351px] shrink-0 overflow-hidden border-2 border-[#00ffff]">
    <GraphTools />
    <div className="mt-[5px] ml-px flex h-[21px] w-[55px] items-center justify-center rounded-t-[5px] border border-b-0 border-[#5c5c5c] bg-linear-to-b from-[#505050] to-[#404040] pb-0.5 text-[#b8b8b8]">Motion0</div>
    <div className="h-[427px] w-[335px] border-t border-r border-[#262626]">
      <Charts />
      <div className="flex h-[60px] border-t-2 border-[#303030] pt-[5px] pl-[3px]">
        <div className="flex h-[20px] w-[194px] items-center border border-[#555555] bg-[#222222] text-[#b8b8b8]">
          <span className="w-[177px] whitespace-pre">Modified Sinusoid</span>
          <div className="flex h-[18px] w-[15px] items-center justify-center border-l border-[#555555] bg-[#3c3c3c]"><Arrow d="down" /></div>
        </div>
        <svg width="42" height="42" className="ml-[15px] shrink-0" fill="none" strokeWidth="2.500">
          <path d="M0 18H9L19 3.500H29L38 18" stroke={ORG} /><path d="M1.500 20V38M37.500 20V38M1.500 29H37.500" stroke="#00f0e0" />
        </svg>
        <div className="-mt-[4px] w-[81px] text-[#b8b8b8]">
          <div className="h-[21px] pt-px whitespace-pre">Motion-Width</div>
          <div className="h-[24px] bg-[#b3b3b3] leading-[15px] text-black">360</div>
        </div>
      </div>
    </div>
  </section>
);

/* ---------- window ---------- */

const TitleBar = () => (
  <header className="flex h-[27px] shrink-0 items-center rounded-t-[6px] border-t border-[#262626] bg-linear-to-b from-[#585858] via-[#343434] via-45% to-[#2d2d2d] pl-[8px] text-[#c4c4c4]">
    <svg width="16" height="16" className="mr-[3px] shrink-0">
      <circle cx="8" cy="8" r="7.500" fill="#d8c8a0" /><path d="M3 5Q8 -1 13 5L11 8H5Z" fill="#c07818" /><path d="M5 6V14M8 7V15M11 6V12" stroke="#302010" strokeWidth="1.600" /><circle cx="5" cy="12" r="2" fill="#c07818" />
    </svg>
    <span className="tracking-[-0.03px] whitespace-pre">{"MD PRO 17.1.92  TEST; C:\\Users\\44785\\Documents\\My HelpAndManual Projects\\Models-Tutorials\\Tutorial 6D\\Indexer4-A.cxl"}</span>
    <svg width="60" height="18" className="mr-[5px] ml-auto shrink-0" fill="none" stroke="#2c2c2c" strokeWidth="1.800">
      <g fill="#a4a4a4" stroke="#1e1e1e" strokeWidth="1"><circle cx="12" cy="9" r="8" /><circle cx="31" cy="9" r="8" /><circle cx="50" cy="9" r="8" /></g>
      <path d="M8 12H15M27 5.500H35V12.500H27ZM27 6.500H35M46.500 5.500L53.500 12.500M53.500 5.500L46.500 12.500" />
    </svg>
  </header>
);

const Badge = ({ n, pos, small }: { n: number; pos: string; small?: boolean }) => (
  <div
    className={`absolute flex items-center justify-center rounded-full bg-white font-['Liberation_Sans'] font-bold text-black [-webkit-text-stroke:1.6px_black] ${
      small ? "h-[36px] w-[36px] text-[26px]" : "h-[42px] w-[42px] text-[31px]"
    } ${pos}`}
  >
    <span className="scale-x-[1.12]">{n}</span>
  </div>
);

export default function App() {
  return (
    <div className="bg-white">
      <div className="relative flex h-[722px] w-[1282px] flex-col overflow-hidden rounded-t-[6px] bg-[#3e3e3e] font-['DejaVu_Sans_Condensed','DejaVu_Sans',sans-serif] text-[12px] leading-[16px] [font-stretch:condensed]">
        <TitleBar />
        <Ribbon />
        <div className="mt-1 flex h-[587px] shrink-0 pl-1">
          <div className="w-[917px] shrink-0">
            <div className="flex gap-[5px]">
              <LeftPanel />
              <Centre />
            </div>
            <BottomPanel />
          </div>
          <RightPanel />
        </div>
        <div className="mt-[8px] h-[7px] border-t border-[#585858] bg-[#303030]" />
        <Badge n={1} pos="left-[920px] top-[60px]" />
        <Badge n={1} small pos="left-[497px] top-[121px]" />
        <Badge n={1} small pos="left-[884px] top-[167px]" />
        <Badge n={1} small pos="left-[218px] top-[378px]" />
        <Badge n={1} small pos="left-[441px] top-[476px]" />
        <Badge n={2} pos="left-[573px] top-[237px]" />
        <Badge n={3} pos="left-[32px] top-[331px]" />
        <Badge n={4} pos="left-[411px] top-[619px]" />
        <Badge n={5} pos="left-[1033px] top-[286px]" />
      </div>
    </div>
  );
}
